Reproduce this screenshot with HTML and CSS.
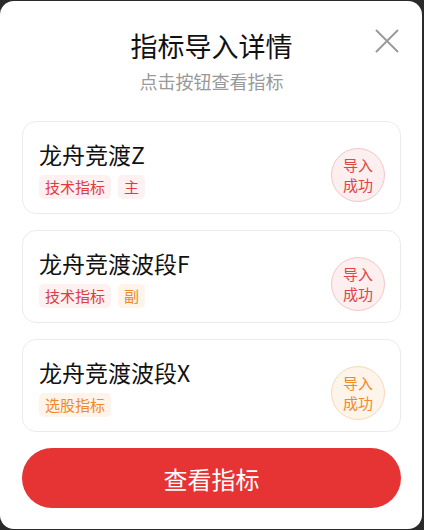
FILE: index.html
```html
<!DOCTYPE html>
<html lang="zh-CN">

<head>
  <meta charset="UTF-8">
  <meta name="viewport" content="width=device-width, initial-scale=1.0">
  <title>指标导入详情</title>
  <link rel="stylesheet" href="styles.css">
</head>

<body>
  <div class="modal">
    <div class="header">
      <h1>指标导入详情</h1>
      <p class="subtitle">点击按钮查看指标</p>
      <button class="close" aria-label="关闭">
        <svg width="24" height="24" viewBox="0 0 24 24">
          <path d="M1 1 L23 23 M23 1 L1 23" stroke="#9a9a9a" stroke-width="2" fill="none" />
        </svg>
      </button>
    </div>

    <div class="list">
      <div class="card">
        <div class="info">
          <div class="name">龙舟竞渡Z</div>
          <div class="tags">
            <span class="tag red">技术指标</span>
            <span class="tag red">主</span>
          </div>
        </div>
        <div class="badge red">导入<br>成功</div>
      </div>

      <div class="card">
        <div class="info">
          <div class="name">龙舟竞渡波段F</div>
          <div class="tags">
            <span class="tag red">技术指标</span>
            <span class="tag orange">副</span>
          </div>
        </div>
        <div class="badge red">导入<br>成功</div>
      </div>

      <div class="card">
        <div class="info">
          <div class="name">龙舟竞渡波段X</div>
          <div class="tags">
            <span class="tag orange">选股指标</span>
          </div>
        </div>
        <div class="badge orange">导入<br>成功</div>
      </div>
    </div>

    <button class="view">查看指标</button>
  </div>
</body>

</html>
```

FILE: styles.css
```css
body {
  margin: 0;
  background-color: #2a2a2a;
  font-family: "Noto Sans CJK SC", "Noto Sans", sans-serif;
}

.modal {
  margin-top: 1px;
  width: 422px;
  height: 528px;
  background-color: #fff;
  border-radius: 14px;
  box-sizing: border-box;
  padding: 30px 21px 0 22px;
}

.header {
  position: relative;
  text-align: center;
}

h1 {
  margin: 0;
  font-size: 27px;
  line-height: 30px;
  font-weight: 400;
  color: #111;
}

.subtitle {
  margin: 8px 0 0;
  font-size: 18px;
  line-height: 24px;
  color: #999;
}

.close {
  position: absolute;
  top: -2px;
  right: 2px;
  padding: 0;
  border: none;
  background: none;
  line-height: 0;
}

.list {
  margin-top: 28px;
  display: flex;
  flex-direction: column;
  gap: 16px;
}

.card {
  display: flex;
  align-items: center;
  justify-content: space-between;
  height: 93px;
  box-sizing: border-box;
  padding: 18px 15px 14px 16px;
  border: 1px solid #ebebeb;
  border-radius: 14px;
}

.info {
  align-self: flex-start;
}

.name {
  font-size: 23px;
  line-height: 28px;
  color: #111;
}

.tags {
  display: flex;
  gap: 7px;
  margin-top: 7px;
}

.tag {
  height: 24px;
  line-height: 24px;
  padding: 0 6px;
  border-radius: 5px;
  font-size: 15px;
}

.tag.red {
  color: #e03c3c;
  background-color: #fdf1f1;
}

.tag.orange {
  color: #ef8a2c;
  background-color: #fef4ea;
}

.badge {
  width: 54px;
  height: 54px;
  box-sizing: border-box;
  margin-top: 10px;
  border-radius: 50%;
  display: flex;
  align-items: center;
  justify-content: center;
  text-align: center;
  font-size: 15px;
  line-height: 20px;
}

.badge.red {
  color: #e04444;
  background-color: #fdefef;
  border: 1px solid #f4c6c6;
}

.badge.orange {
  color: #ef8a2c;
  background-color: #fef4ea;
  border: 1px solid #f8d8b8;
}

.view {
  display: block;
  width: 100%;
  height: 60px;
  margin-top: 16px;
  border: none;
  border-radius: 30px;
  background-color: #e63333;
  color: #fff;
  font-family: "Noto Sans CJK SC", "Noto Sans", sans-serif;
  font-size: 24px;
  cursor: pointer;
}
```
